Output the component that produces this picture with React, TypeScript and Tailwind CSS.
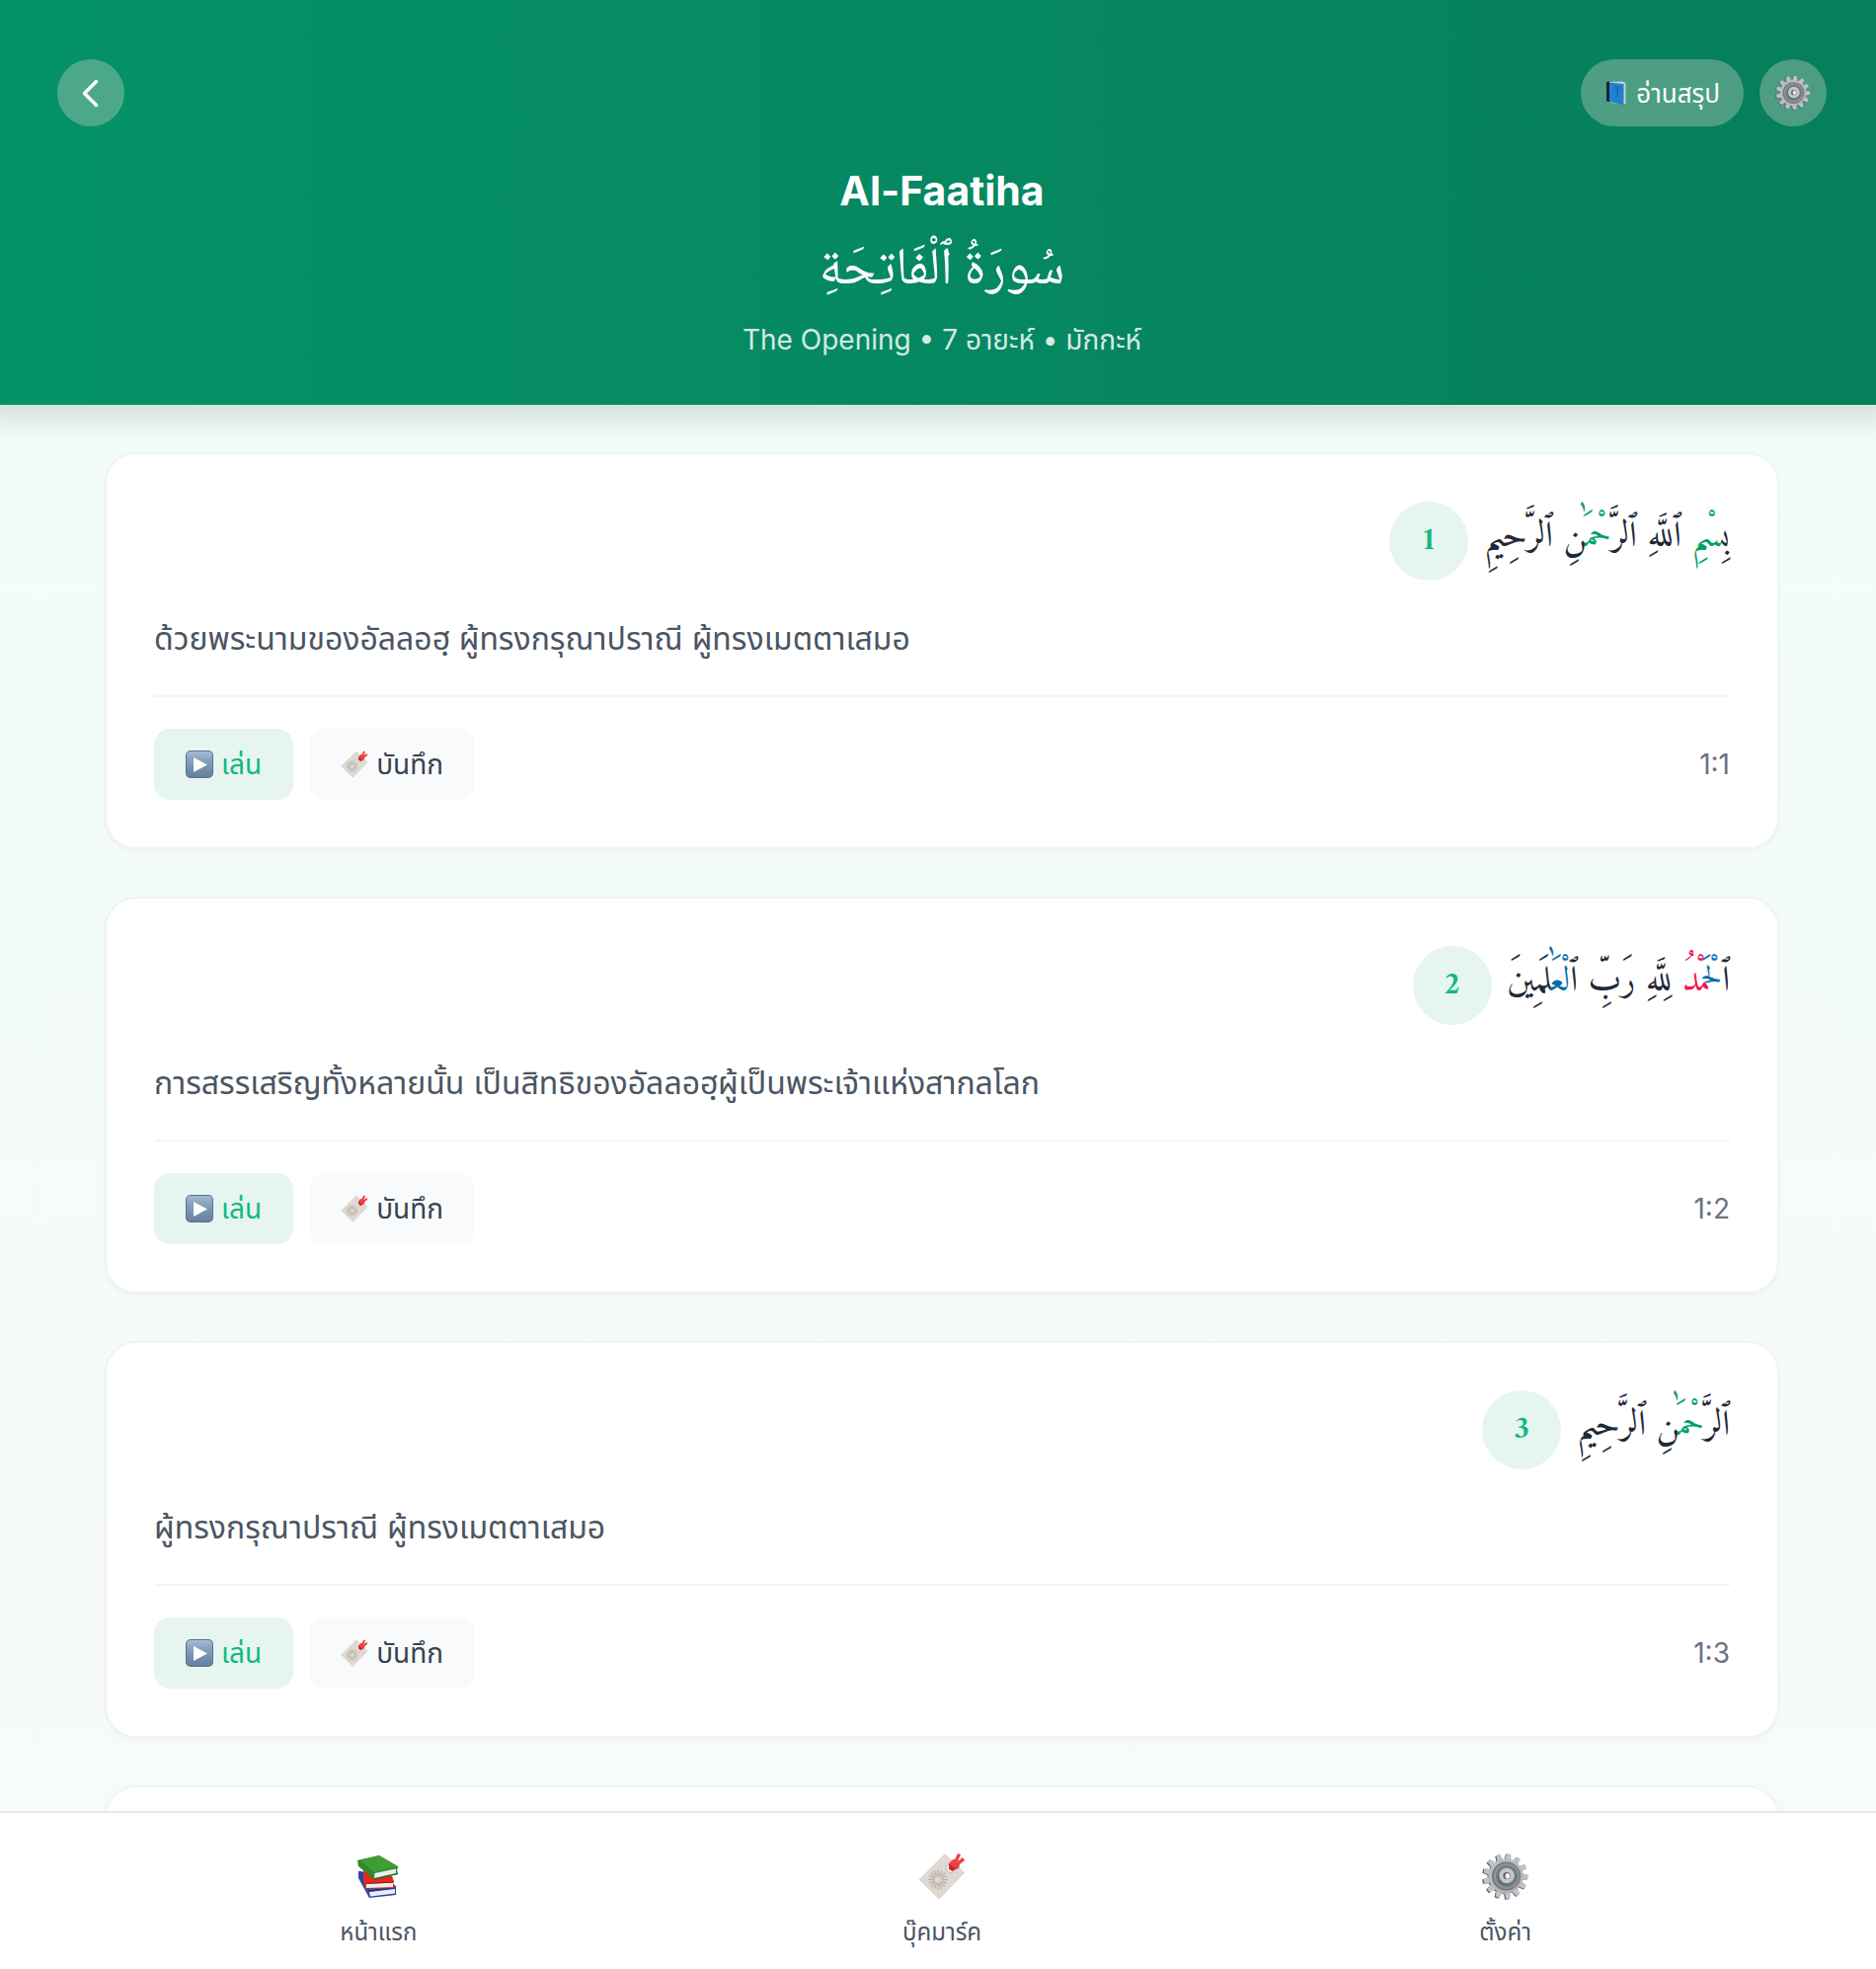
import React from 'react';

type Part = { text: string; tone?: 'green' | 'blue' | 'red' };
type Verse = { id: number; parts: Part[]; translation: string };

const tones = {
  green: 'text-[#00a167]',
  blue: 'text-[#0b6cab]',
  red: 'text-[#f2114f]',
};

const verses: Verse[] = [
  {
    id: 1,
    parts: [
      { text: 'بِ' },
      { text: 'سْمِ', tone: 'green' },
      { text: ' ٱللَّهِ ٱلرَّ' },
      { text: 'حْمَٰ', tone: 'green' },
      { text: 'نِ ٱلرَّحِيمِ' },
    ],
    translation: 'ด้วยพระนามของอัลลอฮฺ ผู้ทรงกรุณาปราณี ผู้ทรงเมตตาเสมอ',
  },
  {
    id: 2,
    parts: [
      { text: 'ٱ' },
      { text: 'لْحَ', tone: 'blue' },
      { text: 'مْدُ', tone: 'red' },
      { text: ' لِلَّهِ رَبِّ ٱ' },
      { text: 'لْعَٰ', tone: 'blue' },
      { text: 'لَمِينَ' },
    ],
    translation: 'การสรรเสริญทั้งหลายนั้น เป็นสิทธิของอัลลอฮฺผู้เป็นพระเจ้าแห่งสากลโลก',
  },
  {
    id: 3,
    parts: [{ text: 'ٱلرَّ' }, { text: 'حْمَٰ', tone: 'green' }, { text: 'نِ ٱلرَّحِيمِ' }],
    translation: 'ผู้ทรงกรุณาปราณี ผู้ทรงเมตตาเสมอ',
  },
];

const teeth = Array.from({ length: 13 }, (_, i) => (i * 360) / 13 + 8);

function Gear({ className }: { className: string }) {
  return (
    <svg viewBox="0 0 48 48" className={className} aria-hidden="true">
      <defs>
        <linearGradient id="gearFace" x1="0" y1="0" x2="1" y2="1">
          <stop offset="0" stopColor="#b9c1c6" />
          <stop offset="1" stopColor="#b3aeb6" />
        </linearGradient>
      </defs>
      <g fill="#5c5757" transform="translate(-1 0.6)">
        {teeth.map((a) => (
          <path key={a} d="M21 8 21.800 1h4.400L27 8Z" transform={`rotate(${a} 24 24)`} />
        ))}
        <circle cx="24" cy="24" r="17.500" />
      </g>
      <g fill="url(#gearFace)">
        {teeth.map((a) => (
          <path key={a} d="M20.400 9 21.900 1.200h4.200L27.600 9Z" fill="#bcc3c9" transform={`rotate(${a} 24 24)`} />
        ))}
        <circle cx="24" cy="24" r="17.500" />
      </g>
      <circle cx="24.500" cy="24" r="14.500" fill="#70777b" />
      <circle cx="24.800" cy="24" r="13" fill="#8e969a" />
      <circle cx="25" cy="24" r="11" fill="#747b7f" />
      <circle cx="24" cy="24.800" r="8" fill="#5d6468" />
      <circle cx="25" cy="23.500" r="7.800" fill="#c3c6ca" />
      <circle cx="25" cy="23.500" r="3.600" fill="#6d5c57" />
      <ellipse cx="25.800" cy="23.800" rx="2.300" ry="2.800" fill="#f3f3f3" />
    </svg>
  );
}

function BlueBook() {
  return (
    <svg viewBox="0 0 20 24" className="h-6 w-5" aria-hidden="true">
      <path d="M0 1 3 .5V21L19 24 16 23 0 20Z" fill="#1d2530" />
      <path d="M3 1 16 .5 19.500 2V23.500L4 22Z" fill="#c3d3df" />
      <path d="M3 1.500 17.500 3V24L3 21Z" fill="#2180cf" />
      <path d="M0 .8 3 1.500V21L0 20.200Z" fill="#14233a" />
      <path d="M8 5.500 14 6M8.500 8 13.500 8.400M11 9v7" stroke="#155e9f" strokeWidth="1" />
    </svg>
  );
}

function PlayBadge() {
  return (
    <svg viewBox="0 0 28 28" className="size-7" aria-hidden="true">
      <defs>
        <linearGradient id="playFace" x1="0" y1="0" x2="0" y2="1">
          <stop offset="0" stopColor="#a3bcd3" />
          <stop offset="0.350" stopColor="#86a0bc" />
          <stop offset="1" stopColor="#64809f" />
        </linearGradient>
      </defs>
      <rect width="28" height="28" rx="5" fill="#58728f" />
      <rect x="1" y="1" width="26" height="26" rx="4" fill="url(#playFace)" />
      <path d="M8 7v15l14-7.500Z" fill="#fff" />
    </svg>
  );
}

const rays = Array.from({ length: 16 }, (_, i) => i * 22.5);

function Bookmark({ className }: { className: string }) {
  return (
    <svg viewBox="0 0 48 48" className={className} aria-hidden="true">
      <path d="M1 27 27 1 47 20 21 47Z" fill="#dfd9d3" />
      <path d="M1 27 21 47 47 20" fill="none" stroke="#d0c9c2" strokeWidth="0.8" />
      <g stroke="#bcb4aa" strokeWidth="1.500">
        {rays.map((a) => (
          <path key={a} d="M20 24V17.500" transform={`rotate(${a} 20 27.500)`} />
        ))}
      </g>
      <circle cx="33" cy="16" r="4.600" fill="#f6f3f1" stroke="#b5aea8" strokeWidth="0.8" />
      <path d="M31 11 35 7 37 7 40 1 43 2 40 9 45 5 47 8 42 12 41 16 36 18 34 19Z" fill="#ea4343" />
      <path d="M31 11 38 16 35 19 31 17Z" fill="#c92b31" />
    </svg>
  );
}

function Books() {
  return (
    <svg viewBox="0 0 44 44" className="size-11" aria-hidden="true">
      <path d="M2 17 5 17 39 31 40 33 40 41 13 44 2 24Z" fill="#2748a8" />
      <path d="M13 38 39 35v4.500L14 42.500Z" fill="#eceef0" />
      <path d="M12.500 37 40 33.500" stroke="#17378f" strokeWidth="1.500" />
      <path d="M7 15 36 22 38 27 37 29 39 34 9 35 7 26Z" fill="#e22a1d" />
      <path d="M10 30 37 28.500v4.500L10 34Z" fill="#eceef0" />
      <path d="M9 29.500 38 28" stroke="#ad150f" strokeWidth="1.200" />
      <path d="M1 6 23 1 42 12 42 14 41 15 42 20 18 25 2 12Z" fill="#2c8a2b" />
      <path d="M3 5.600 23 1 42 12.500 18 18Z" fill="#3f9d35" />
      <path d="M18.500 19 40 14.500v4.500L18 24Z" fill="#eceef0" />
      <path d="M42 19.500 18 25" stroke="#176a20" strokeWidth="1.200" />
    </svg>
  );
}

function VerseCard({ verse }: { verse: Verse }) {
  return (
    <article className="rounded-[32px] border-2 border-[#f0f3f4] bg-white p-12 shadow-[0_2px_4px_rgba(0,0,0,0.04)]">
      <div dir="rtl" className="flex h-20 items-start gap-4">
        <p lang="ar" className="font-[Amiri,'Noto_Naskh_Arabic','Scheherazade_New','Liberation_Serif',serif] text-[36px] leading-[74px] text-[#1f2937]">
          {verse.parts.map((p, i) => (
            <span key={i} className={p.tone ? tones[p.tone] : undefined}>
              {p.text}
            </span>
          ))}
        </p>
        <span className="flex size-20 shrink-0 items-center justify-center rounded-full bg-[#e7f5f0] font-[Amiri,'Liberation_Serif',serif] text-[32px] font-bold text-[#10b981]">
          {verse.id}
        </span>
      </div>
      <p lang="th" className="mt-8 text-[32px] leading-[54px] text-[#4b5563]">
        {verse.translation}
      </p>
      <div className="mt-[30px] flex items-center justify-between border-t-2 border-[#f3f4f6] pt-8">
        <div className="flex gap-4">
          <button type="button" className="flex h-[72px] items-center gap-2 rounded-2xl bg-[#e7f5f0] px-8 text-[28px] text-[#10b981]">
            <PlayBadge />
            เล่น
          </button>
          <button type="button" className="flex h-[72px] items-center gap-2 rounded-2xl bg-[#f9fafb] px-8 text-[28px] text-[#374151]">
            <Bookmark className="size-7" />
            บันทึก
          </button>
        </div>
        <span className="text-[28px] text-[#6b7280]">1:{verse.id}</span>
      </div>
    </article>
  );
}

export default function App() {
  return (
    <div className="flex h-screen flex-col overflow-hidden bg-linear-to-b from-[#f0fdf9] to-[#f7faf9] font-[Inter,'Noto_Sans_Thai','Noto_Sans',sans-serif]">
      <header className="relative z-10 bg-linear-to-r from-[#059268] to-[#067f5b] pt-[60px] pb-11 pl-[58px] pr-[50px] text-white shadow-[0_2px_26px_14px_rgba(0,0,0,0.12)]">
        <div className="flex items-center justify-between">
          <button type="button" aria-label="Back" className="flex size-[68px] items-center justify-center rounded-full bg-[#d3d3c8]/35">
            <svg viewBox="0 0 40 40" className="size-10" fill="none" stroke="#fff" strokeWidth="3.500" strokeLinecap="round" strokeLinejoin="round" aria-hidden="true">
              <path d="M25.500 8.500 13.500 20.500l12 12" />
            </svg>
          </button>
          <div className="flex gap-4">
            <button type="button" className="flex h-[68px] items-center gap-2 rounded-full bg-[#d3d3c8]/35 px-6 text-[26px]">
              <span className="flex w-6 justify-center"><BlueBook /></span>
              อ่านสรุป
            </button>
            <button type="button" aria-label="Settings" className="flex size-[68px] items-center justify-center rounded-full bg-[#d3d3c8]/35">
              <Gear className="size-9" />
            </button>
          </div>
        </div>
        <div className="mt-9 text-center">
          <h1 className="text-[41px] leading-[58px] font-bold">Al-Faatiha</h1>
          <p lang="ar" dir="rtl" className="mt-2 font-['Noto_Naskh_Arabic','Scheherazade_New','Noto_Sans_Arabic','Liberation_Serif',serif] text-[53px] leading-[92px]">
            سُورَةُ ٱلْفَاتِحَةِ
          </p>
          <p className="text-[28px] leading-[44px] text-[#d5eae2]">The Opening • 7 อายะห์ • มักกะห์</p>
        </div>
      </header>

      <main className="min-h-0 flex-1 space-y-12 overflow-y-auto pt-12 pl-[106px] pr-[98px] [scrollbar-width:none]">
        {verses.map((v) => (
          <VerseCard key={v.id} verse={v} />
        ))}
        <div className="h-24 rounded-t-[32px] border-2 border-b-0 border-[#f0f3f4] bg-white" />
      </main>

      <nav className="relative z-10 flex border-t-2 border-[#e5e7eb] bg-white pt-10 pb-5 pl-[98px] pr-[90px] text-2xl text-[#4b5563]">
        <a href="#home" className="flex flex-1 flex-col items-center gap-4">
          <span className="flex h-12 items-center"><Books /></span>
          <span className="leading-[34px]">หน้าแรก</span>
        </a>
        <a href="#bookmarks" className="flex flex-1 flex-col items-center gap-4">
          <Bookmark className="size-12" />
          <span className="leading-[34px]">บุ๊คมาร์ค</span>
        </a>
        <a href="#settings" className="flex flex-1 flex-col items-center gap-4">
          <Gear className="size-12" />
          <span className="leading-[34px]">ตั้งค่า</span>
        </a>
      </nav>
    </div>
  );
}
